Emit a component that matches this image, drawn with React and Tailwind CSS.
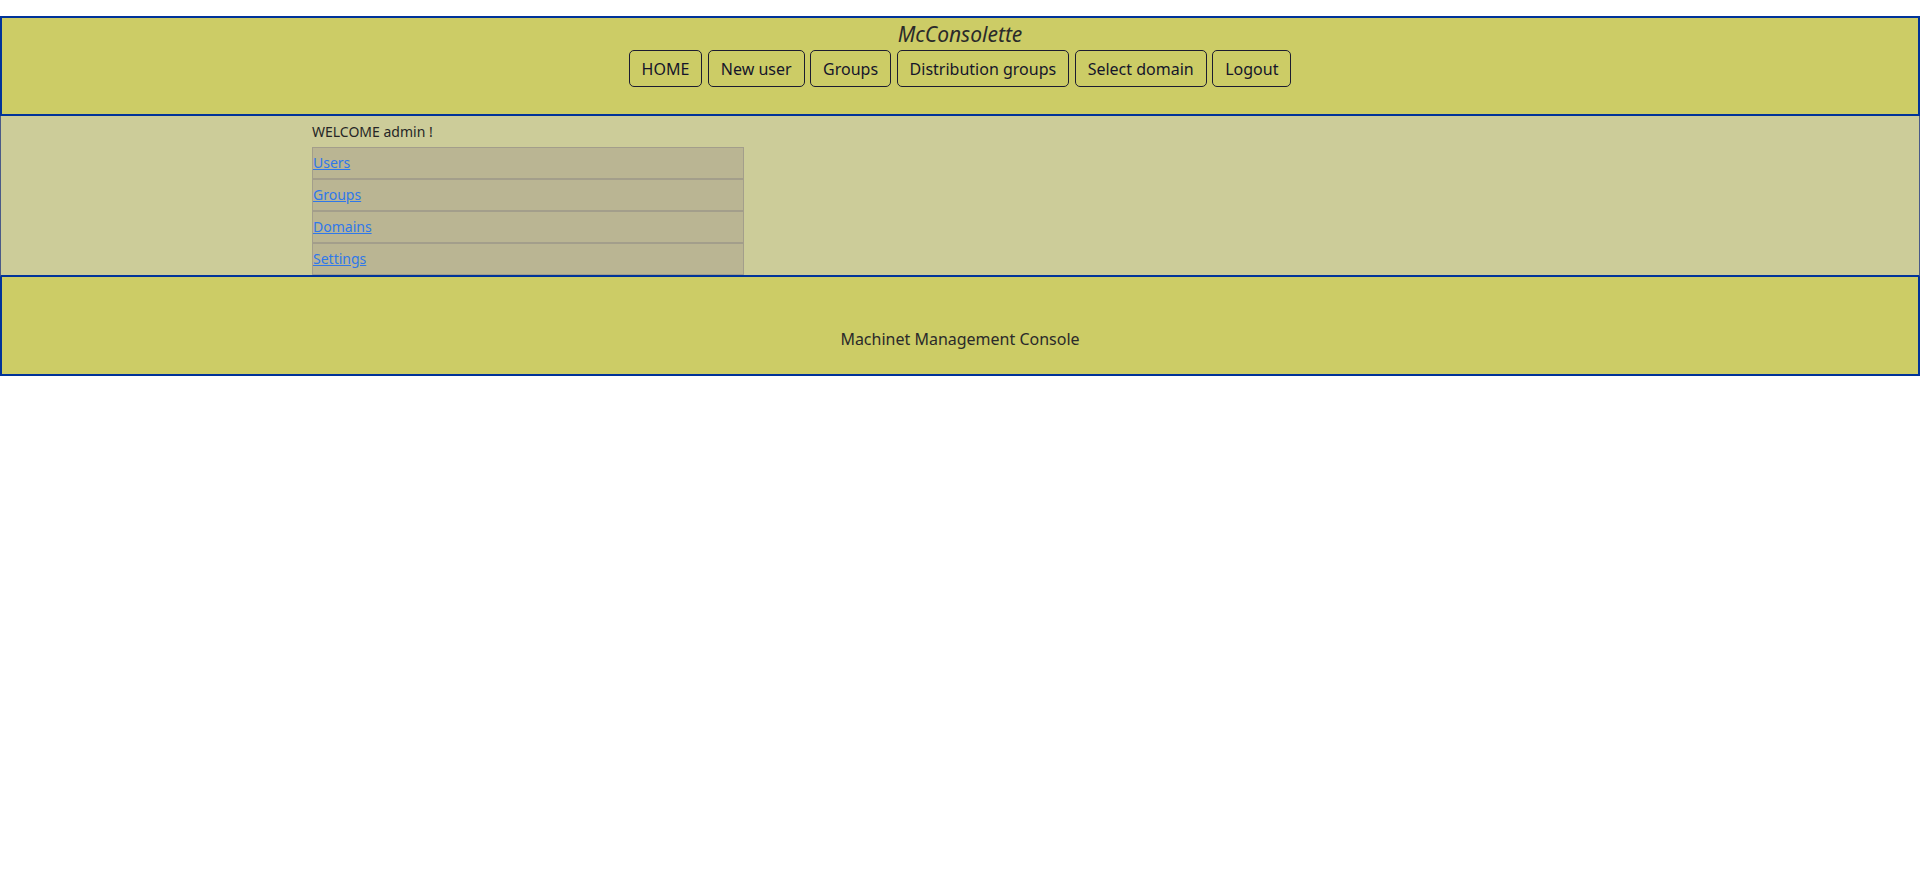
export default function App() {
  const buttons = ["HOME", "New user", "Groups", "Distribution groups", "Select domain", "Logout"];
  const links = ["Users", "Groups", "Domains", "Settings"];
  return (
    <div className="w-[1920px] min-h-[893px] bg-white pt-[16px] text-[#222]" style={{ fontFamily: '"Noto Sans", "Open Sans", sans-serif' }}>
      <header className="h-[100px] bg-[#cccc66] border-2 border-[#003399] flex flex-col items-center">
        <h1 className="mt-[2px] text-[21px] leading-[28px] italic font-normal text-[#2a2a2a]">McConsolette</h1>
        <nav className="mt-[2px] flex gap-[5.5px]">
          {buttons.map((b) => (
            <button
              key={b}
              className="h-[37px] px-[12px] border border-[#1c1c30] rounded-[5px] bg-transparent text-[16px] leading-[22px] text-[#15152a] flex items-center"
            >
              {b}
            </button>
          ))}
        </nav>
      </header>
      <main className="h-[161px] bg-[#cccc99] border-x border-b-2 border-x-[#4a5a88] border-b-[#003399] overflow-hidden">
        <div className="ml-[311px] pt-[6px]">
          <div className="text-[14px] leading-[19px] text-[#262626]">WELCOME admin !</div>
          <ul className="mt-[6px] w-[432px]">
            {links.map((l) => (
              <li key={l} className="h-[32px] border border-[#a39e8b] bg-[#bab593] flex items-center pb-[1px]">
                <a href="#" className="text-[14px] leading-[19px] text-[#2f78ea] underline">
                  {l}
                </a>
              </li>
            ))}
          </ul>
        </div>
      </main>
      <footer className="h-[99px] bg-[#cccc66] border-x-2 border-b-2 border-[#003399] flex justify-center">
        <p className="pt-[51px] text-[16px] leading-[22px] text-[#2a2a2a]">Machinet Management Console</p>
      </footer>
    </div>
  );
}
